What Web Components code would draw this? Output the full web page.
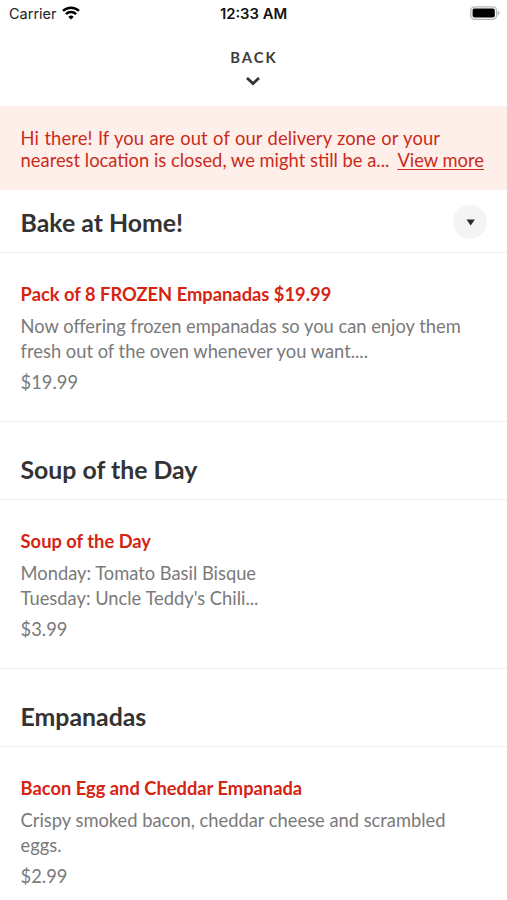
<!DOCTYPE html>
<html lang="en">
<head>
<meta charset="utf-8">
<title>Menu</title>
<style>
html,body{margin:0;height:100%;background:#fff}
body{font-family:Lato,"Open Sans",sans-serif;overflow:hidden}
</style>
</head>
<body>
<menu-app></menu-app>
<script>
const define = (name, html) => {
  const t = document.createElement('template');
  t.innerHTML = html;
  customElements.define(name, class extends HTMLElement {
    constructor() {
      super();
      this.attachShadow({mode: 'open'}).appendChild(t.content.cloneNode(true));
    }
  });
};

define('status-bar', `
<style>
:host{display:grid;grid-template-columns:1fr auto 1fr;align-items:center;height:28px;padding:0 7px 0 9px;box-sizing:border-box;font:14.5px/28px Inter,sans-serif;color:#222}
.l{display:flex;align-items:center;gap:5px}
.l svg{margin-top:-2px}
.t{font-weight:600;font-size:14.8px;color:#111;margin-right:2px}
.b{justify-self:end;margin-top:-2px}
svg{display:block}
</style>
<div class="l"><span>Carrier</span>
<svg width="18" height="14" viewBox="0 0 18 14"><g fill="none" stroke="#000" stroke-width="2.5"><path d="M1 4.900a11.600 11.600 0 0 1 16 0"/><path d="M3.900 8.100a7.400 7.400 0 0 1 10.200 0"/></g><path d="M9 13.600 6.300 10.900a3.900 3.900 0 0 1 5.400 0z"/></svg></div>
<span class="t">12:33 AM</span>
<svg class="b" width="30" height="14" viewBox="0 0 30 14"><rect x=".8" y=".8" width="25.800" height="12.600" rx="3.800" fill="none" stroke="#b5b5b5" stroke-width="1.300"/><rect x="2.600" y="2.600" width="22.200" height="9" rx="1.800"/><path d="M27.900 4.700c2.200.8 2.200 3.800 0 4.600z" fill="#b5b5b5"/></svg>`);

define('back-bar', `
<style>
:host{display:flex;flex-direction:column;align-items:center;height:78px;box-sizing:border-box;padding:20px 1px 0 0;color:#3c3c3c}
span{font-weight:700;font-size:14.8px;line-height:18px;letter-spacing:2px;margin-right:-2px}
svg{display:block;margin-top:10px}
</style>
<span><slot></slot></span>
<svg width="16" height="10" viewBox="0 0 16 10"><path d="M2 2 8 7.600 14 2" fill="none" stroke="#333" stroke-width="2.800"/></svg>`);

define('notice-banner', `
<style>
:host{display:block;height:84px;box-sizing:border-box;padding:21px 23px 0 20.600px;background:#ffefeb;color:#c92c1a;font-size:18.350px;line-height:22px}
.f{letter-spacing:.12px;word-spacing:.5px;white-space:nowrap}
.r{display:flex;justify-content:space-between;white-space:nowrap}
u{text-underline-offset:2px;text-decoration-thickness:1px}
</style>
<div class="f"><slot name="first"></slot></div>
<div class="r"><slot name="second"></slot><u><slot name="action"></slot></u></div>`);

define('section-head', `
<style>
:host{display:flex;align-items:center;justify-content:space-between;height:63px;box-sizing:border-box;padding:2px 20px 0 20.500px;border-bottom:1px solid #f0f0f0;color:#333;font-weight:700;font-size:24.850px;line-height:30px;white-space:nowrap}
</style>
<span><slot></slot></span><slot name="control"></slot>`);

define('drop-button', `
<style>
:host{display:grid;place-items:center;width:34px;height:34px;border-radius:50%;background:#f4f4f4}
svg{display:block}
</style>
<svg width="10" height="8" viewBox="0 0 10 8"><path d="M1.500 1.400h8.400L5.700 7.600z" fill="#2c2c2c"/></svg>`);

define('menu-item', `
<style>
:host{display:block;height:169px;box-sizing:border-box;padding-top:29px;padding-left:20.600px;border-bottom:1px solid #f0f0f0;color:#7a7a7a;font-size:18.320px;line-height:24px;white-space:nowrap}
.n{color:#d62412;font-weight:700;line-height:25px}
.d{margin-top:6.500px;height:49.500px;line-height:25px}
.p{margin-top:7px}
</style>
<div class="n"><slot name="name"></slot></div>
<div class="d"><slot></slot></div>
<div class="p"><slot name="price"></slot></div>`);

define('menu-app', `
<style>
:host{display:block;width:507px}
.gap{padding-top:15px}
</style>
<status-bar></status-bar>
<back-bar>BACK</back-bar>
<notice-banner><span slot="first">Hi there! If you are out of our delivery zone or your</span><span slot="second">nearest location is closed, we might still be a...</span><span slot="action">View more</span></notice-banner>
<section-head>Bake at Home!<drop-button slot="control"></drop-button></section-head>
<menu-item><span slot="name">Pack of 8 FROZEN Empanadas $19.99</span>Now offering frozen empanadas so you can enjoy them<br>fresh out of the oven whenever you want....<span slot="price">$19.99</span></menu-item>
<div class="gap"><section-head>Soup of the Day</section-head></div>
<menu-item><span slot="name">Soup of the Day</span>Monday: Tomato Basil Bisque<br>Tuesday: Uncle Teddy's Chili...<span slot="price">$3.99</span></menu-item>
<div class="gap"><section-head>Empanadas</section-head></div>
<menu-item><span slot="name">Bacon Egg and Cheddar Empanada</span>Crispy smoked bacon, cheddar cheese and scrambled<br>eggs.<span slot="price">$2.99</span></menu-item>`);
</script>
</body>
</html>
